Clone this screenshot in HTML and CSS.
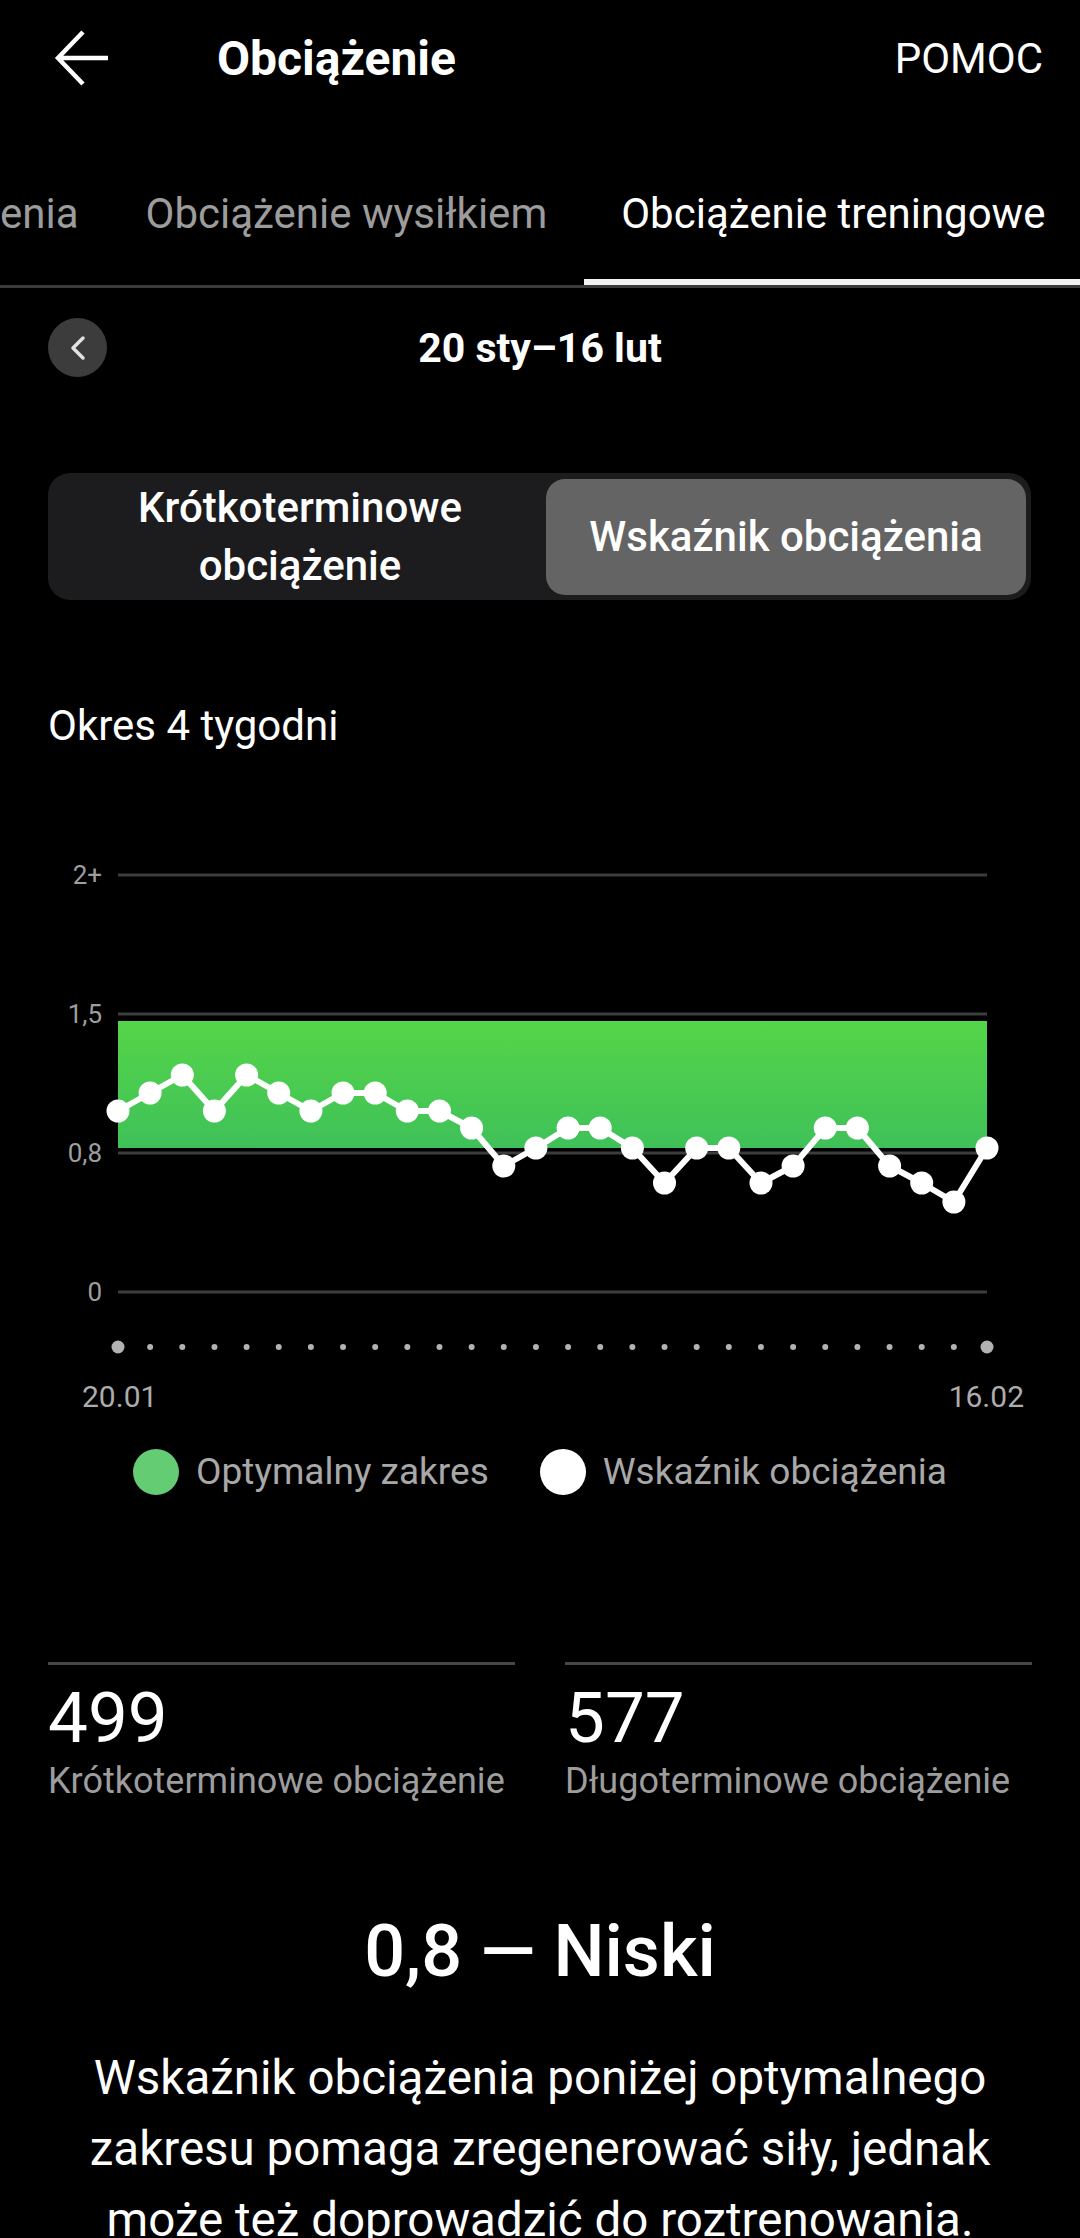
FILE: index.html
```html
<!DOCTYPE html>
<html lang="pl">
<head>
<meta charset="UTF-8">
<meta name="viewport" content="width=device-width, initial-scale=1.0">
<title>Obciążenie</title>
<link rel="stylesheet" href="styles.css">
</head>
<body>
<header class="app-bar">
  <svg class="back" viewBox="0 0 60 60" fill="none" stroke="#fff" stroke-width="4.5">
    <path d="M5 30 H55 M30 4 L5 30 L30 56"/>
  </svg>
  <h1 class="app-title">Obciążenie</h1>
  <span class="help">POMOC</span>
</header>

<nav class="tabs">
  <div class="tab first">enia</div>
  <div class="tab">Obciążenie wysiłkiem</div>
  <div class="tab active">Obciążenie treningowe</div>
</nav>

<div class="date-row">
  <button class="prev">
    <svg width="20" height="26" viewBox="0 0 20 26" fill="none" stroke="#e2e2e2" stroke-width="3.5" stroke-linecap="round" stroke-linejoin="round">
      <polyline points="15,3 5,13 15,23"/>
    </svg>
  </button>
  <div class="date">20 sty–16 lut</div>
</div>

<div class="segment">
  <div class="seg">Krótkoterminowe<br>obciążenie</div>
  <div class="seg active">Wskaźnik obciążenia</div>
</div>

<p class="period">Okres 4 tygodni</p>

<svg class="chart" viewBox="0 850 1080 510">
  <defs>
    <linearGradient id="band" x1="0" y1="0" x2="0" y2="1">
      <stop offset="0" stop-color="#55d548"/>
      <stop offset="1" stop-color="#3fc159"/>
    </linearGradient>
    <marker id="dot" viewBox="0 0 24 24" refX="12" refY="12" markerWidth="24" markerHeight="24" markerUnits="userSpaceOnUse">
      <circle cx="12" cy="12" r="11.5" fill="#fff"/>
    </marker>
  </defs>

  <g stroke="#3d3d3d" stroke-width="3">
    <line x1="118" y1="875" x2="987" y2="875"/>
    <line x1="118" y1="1014" x2="987" y2="1014"/>
    <line x1="118" y1="1153" x2="987" y2="1153"/>
    <line x1="118" y1="1292" x2="987" y2="1292"/>
  </g>

  <g class="y-label" text-anchor="end" dominant-baseline="central">
    <text x="102" y="875">2+</text>
    <text x="102" y="1014">1,5</text>
    <text x="102" y="1153">0,8</text>
    <text x="102" y="1292">0</text>
  </g>

  <rect x="118" y="1021" width="869" height="127" fill="url(#band)"/>

  <polyline fill="none" stroke="#fff" stroke-width="6" stroke-linejoin="round"
    marker-start="url(#dot)" marker-mid="url(#dot)" marker-end="url(#dot)"
    points="118,1111 150.1,1093 182.3,1075 214.4,1111 246.6,1075 278.7,1093 310.9,1111 343,1093 375.2,1093 407.3,1111 439.5,1111 471.6,1128 503.8,1166 535.9,1148 568.1,1128 600.2,1128 632.4,1148 664.5,1183 696.7,1148 728.8,1148 761,1183 793.1,1166 825.3,1128 857.4,1128 889.6,1166 921.7,1183 953.9,1202 987,1148"/>

  <!-- dni na osi X -->
  <line x1="118" y1="1347" x2="987" y2="1347" stroke="#b2b2b2" stroke-width="6" stroke-linecap="round" stroke-dasharray="0 32.148"/>
  <circle cx="118" cy="1347" r="6.5" fill="#b2b2b2"/>
  <circle cx="987" cy="1347" r="6.5" fill="#b2b2b2"/>
</svg>

<div class="axis-dates">
  <span>20.01</span>
  <span>16.02</span>
</div>

<div class="legend">
  <div class="legend-item"><span class="swatch green"></span>Optymalny zakres</div>
  <div class="legend-item"><span class="swatch white"></span>Wskaźnik obciążenia</div>
</div>

<div class="stats">
  <div class="stat">
    <div class="stat-value">499</div>
    <div class="stat-label">Krótkoterminowe obciążenie</div>
  </div>
  <div class="stat">
    <div class="stat-value">577</div>
    <div class="stat-label">Długoterminowe obciążenie</div>
  </div>
</div>

<h2 class="verdict">0,8 — Niski</h2>
<p class="note">Wskaźnik obciążenia poniżej optymalnego zakresu pomaga zregenerować siły, jednak może też doprowadzić do roztrenowania.</p>
</body>
</html>
```

FILE: styles.css
```css
body {
  margin: 0;
  width: 1080px;
  background-color: #000;
  color: #fff;
  font-family: Roboto, "Noto Sans", sans-serif;
  overflow-x: hidden;
}

.app-bar {
  display: flex;
  align-items: center;
  height: 116px;
  padding: 0 37px 0 53px;
}

.back {
  width: 60px;
  height: 60px;
  display: block;
}

.app-title {
  margin: 0 0 0 104px;
  font-size: 48px;
  font-weight: 700;
}

.help {
  margin-left: auto;
  font-size: 42px;
}

.tabs {
  display: flex;
  white-space: nowrap;
  overflow: hidden;
  border-bottom: 3px solid #3b3b3b;
}

.tab {
  flex-shrink: 0;
  padding: 74px 37px 42px;
  font-size: 42px;
  line-height: 47px;
  color: #9c9c9c;
  border-bottom: 6px solid transparent;
}

.tab.first {
  padding-left: 0;
  padding-right: 30px;
}

.tab.active {
  color: #fff;
  border-bottom-color: #f2f2f2;
}

.date-row {
  display: grid;
  grid-template-columns: 1fr auto 1fr;
  align-items: center;
  height: 59px;
  margin-top: 30px;
  padding: 0 48px;
}

.prev {
  width: 59px;
  height: 59px;
  padding: 0;
  border: none;
  border-radius: 50%;
  background-color: #3c3c3c;
  display: flex;
  align-items: center;
  justify-content: center;
}

.date {
  font-size: 41px;
  font-weight: 700;
  line-height: 48px;
}

.segment {
  display: grid;
  grid-template-columns: 492fr 480fr;
  box-sizing: border-box;
  height: 127px;
  margin: 96px 49px 0 48px;
  padding: 6px 5px 6px 6px;
  background-color: #1c1c1e;
  border-radius: 22px;
}

.seg {
  display: flex;
  align-items: center;
  justify-content: center;
  text-align: center;
  font-size: 42px;
  font-weight: 500;
  line-height: 58px;
  border-radius: 19px;
}

.seg.active {
  background-color: #646464;
}

.period {
  margin: 102px 0 0 48px;
  font-size: 42px;
  line-height: 48px;
}

.chart {
  display: block;
  width: 1080px;
  height: 510px;
  margin-top: 100px;
}

.y-label {
  font-family: Roboto, sans-serif;
  font-size: 26px;
  fill: #9e9e9e;
}

.axis-dates {
  display: flex;
  justify-content: space-between;
  margin-top: 20px;
  padding: 0 56px 0 82px;
  font-size: 30px;
  line-height: 34px;
  color: #acacac;
}

.legend {
  display: flex;
  justify-content: center;
  gap: 51px;
  margin-top: 35px;
}

.legend-item {
  display: flex;
  align-items: center;
  gap: 17px;
  font-size: 37px;
  line-height: 46px;
  color: #a8a8a8;
}

.swatch {
  width: 46px;
  height: 46px;
  border-radius: 50%;
}

.swatch.green {
  background-color: #64cd74;
}

.swatch.white {
  background-color: #fff;
}

.stats {
  display: grid;
  grid-template-columns: 1fr 1fr;
  column-gap: 50px;
  margin-top: 167px;
  padding: 0 48px;
}

.stat {
  border-top: 3px solid #474747;
  padding-top: 13px;
}

.stat-value {
  font-size: 71px;
  line-height: 80px;
}

.stat-label {
  margin-top: 2px;
  font-size: 36px;
  line-height: 42px;
  color: #9d9d9d;
  white-space: nowrap;
}

.verdict {
  margin: 108px 0 0;
  text-align: center;
  font-size: 72px;
  font-weight: 500;
  line-height: 84px;
}

.note {
  margin: 49px 50px 0;
  text-align: center;
  font-size: 47.5px;
  line-height: 71px;
}
```
